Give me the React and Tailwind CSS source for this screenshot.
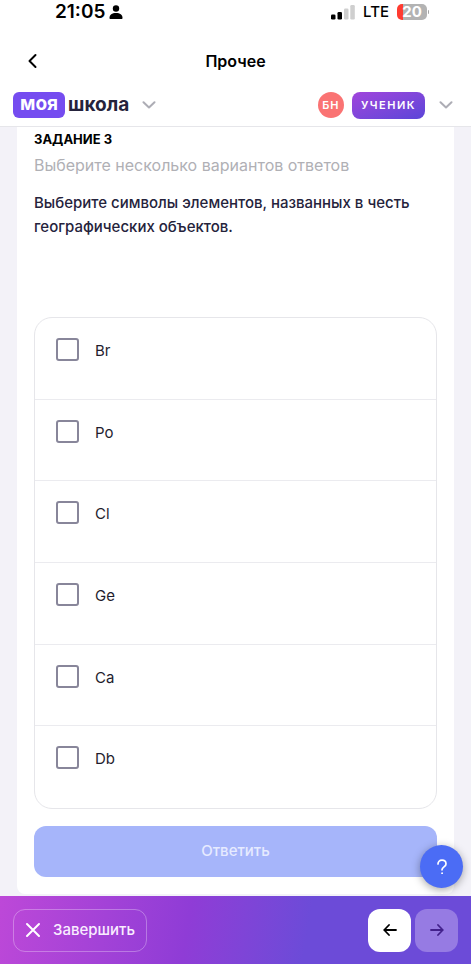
import React from 'react';

const options = ['Br', 'Po', 'Cl', 'Ge', 'Ca', 'Db'];

function ChevronDown() {
  return (
    <svg width="14" height="8" viewBox="0 0 14 8" fill="none" stroke="#adadb5" strokeWidth="2" strokeLinecap="round" strokeLinejoin="round">
      <path d="M1.5 1.2 7 6.5l5.5-5.3" />
    </svg>
  );
}

function StatusBar() {
  return (
    <div className="h-6 flex items-center justify-between pl-[55px] pr-[42px] text-black">
      <div className="flex items-center gap-1">
        <span className="text-[19px] font-semibold">21:05</span>
        <svg width="14" height="16" viewBox="0 0 14 16" fill="currentColor">
          <circle cx="7" cy="4.500" r="3.200" />
          <path d="M.5 14C.5 10.600 3 9 7 9s6.500 1.600 6.500 5c0 .7-.4 1-1 1h-11c-.6 0-1-.3-1-1Z" />
        </svg>
      </div>
      <div className="flex items-center">
        <svg width="24" height="16" viewBox="0 0 24 16">
          <rect x="0" y="10.500" width="4.500" height="5" rx="1.300" fill="#000" />
          <rect x="6.500" y="8" width="4.500" height="7.500" rx="1.300" fill="#000" />
          <rect x="13" y="4.500" width="4.500" height="11" rx="1.300" fill="#cfcfcf" />
          <rect x="19.300" y="1" width="4.500" height="14.500" rx="1.300" fill="#cfcfcf" />
        </svg>
        <span className="ml-2 text-[15px] font-medium">LTE</span>
        <div className="ml-2 flex items-center gap-px">
          <div className="h-4 w-[30px] rounded-[5px] bg-linear-to-r from-[#ff3b30] from-20% to-[#b3b3b3] to-20% flex items-center justify-center text-[15px] font-bold text-white">
            20
          </div>
          <span className="h-1 w-px rounded-r bg-[#a5a5a5]" />
        </div>
      </div>
    </div>
  );
}

function TitleBar() {
  return (
    <div className="mt-[14px] h-[46px] grid grid-cols-[40px_1fr_40px] items-center px-3">
      <button aria-label="Назад" className="h-10 w-10 flex items-center justify-center">
        <svg width="10" height="16" viewBox="0 0 10 16" fill="none" stroke="#000" strokeWidth="2" strokeLinecap="round" strokeLinejoin="round">
          <path d="M8.500 2 2.500 8l6 6" />
        </svg>
      </button>
      <h1 className="text-center text-base font-semibold text-black">Прочее</h1>
    </div>
  );
}

function BrandBar() {
  return (
    <div className="h-[43px] flex items-center justify-between border-b border-[#e6e6ea] pl-[13px] pr-[17px]">
      <div className="flex items-center">
        <a href="#" className="flex items-center gap-[3px] text-[19px] leading-6 font-bold text-[#25233c]">
          <span className="h-[26px] rounded-md bg-[#754cf0] px-[7px] text-white">моя</span>
          <span>школа</span>
        </a>
        <button aria-label="Меню" className="ml-3 p-px">
          <ChevronDown />
        </button>
      </div>
      <div className="flex items-center">
        <span className="h-[26px] w-[26px] rounded-full bg-[#fa7373] flex items-center justify-center text-[11px] font-semibold tracking-widest text-white">
          БН
        </span>
        <span className="ml-2 h-[27px] rounded-lg bg-linear-to-br from-[#a044dc] to-[#5b45d8] px-[9px] flex items-center text-[11px] font-semibold tracking-[1.5px] text-white">
          УЧЕНИК
        </span>
        <button aria-label="Профиль" className="ml-[13px] p-px">
          <ChevronDown />
        </button>
      </div>
    </div>
  );
}

function Option({ label }) {
  return (
    <label className="flex items-start border-b border-[#ebebef] last:border-b-0 pl-[21px] pt-5">
      <input
        type="checkbox"
        className="h-[23px] w-[23px] shrink-0 appearance-none rounded-[3px] border-2 border-[#88869a] checked:bg-[#4b6cf5]"
      />
      <span className="ml-4 mt-px text-[15px] leading-6 text-[#1f1d2e]">{label}</span>
    </label>
  );
}

export default function App() {
  return (
    <div className="min-h-screen flex flex-col bg-white font-['Inter',sans-serif]">
      <header>
        <StatusBar />
        <TitleBar />
        <BrandBar />
      </header>

      {/* Task card */}
      <main className="relative flex-1 bg-[#f3f2f8] pl-[17px] pr-[17px] pb-[2px]">
        <div className="rounded-b-lg bg-white px-[17px] pb-[17px]">
          <h2 className="text-[13px] leading-6 font-bold text-black">ЗАДАНИЕ 3</h2>
          <p className="text-base leading-7 text-[#b0b0b5]">Выберите несколько вариантов ответов</p>
          <p className="mt-3 text-[15px] leading-6 font-medium text-[#25233c]">
            Выберите символы элементов, названных в честь географических объектов.
          </p>

          <div className="mt-[78px] h-[492px] grid grid-rows-6 rounded-[18px] border border-[#e6e6ea]">
            {options.map((label) => (
              <Option key={label} label={label} />
            ))}
          </div>

          <button className="mt-[17px] h-[51px] w-full rounded-xl bg-[#a6b5fa] text-[15px] font-medium text-[#e6ebff]">
            Ответить
          </button>
        </div>

        {/* Help bubble floating over the card */}
        <button
          aria-label="Помощь"
          className="absolute right-2 bottom-2 h-[43px] w-[43px] rounded-full bg-[#4b6cf5] shadow-[0_2px_8px_rgba(0,0,0,0.35)] flex items-center justify-center"
        >
          <svg width="12" height="16" viewBox="0 0 12 16" fill="none" stroke="#fff" strokeWidth="1.700" strokeLinecap="round" strokeLinejoin="round">
            <path d="M2 5C2 2.700 3.500 1.200 6 1.200S10 2.700 10 4.900c0 3-4 2.900-4 5.900" />
            <circle cx="6" cy="14.200" r="0.500" fill="#fff" strokeWidth="1" />
          </svg>
        </button>
      </main>

      {/* Bottom navigation */}
      <footer className="mb-[14px] h-[68px] flex items-center justify-between bg-linear-100 from-[#bd48d8] via-[#8f3cd6] via-40% to-[#6c4bd8] to-65% pl-[13px] pr-[13px]">
        <button className="h-[43px] flex items-center gap-3 rounded-xl border border-white/30 px-[11px] text-[15px] font-medium text-[#f9edff]">
          <svg width="16" height="16" viewBox="0 0 16 16" fill="none" stroke="#fff" strokeWidth="2" strokeLinecap="round">
            <path d="M2 2l12 12M14 2 2 14" />
          </svg>
          Завершить
        </button>
        <div className="flex gap-1">
          <button aria-label="Предыдущее" className="h-[43px] w-[43px] rounded-xl bg-white flex items-center justify-center">
            <svg width="14" height="12" viewBox="0 0 14 12" fill="none" stroke="#000" strokeWidth="1.800" strokeLinecap="round" strokeLinejoin="round">
              <path d="M13 6H1.200M6 1 1.200 6 6 11" />
            </svg>
          </button>
          <button aria-label="Следующее" disabled className="h-[43px] w-[43px] rounded-xl bg-[#967be3] flex items-center justify-center">
            <svg width="14" height="12" viewBox="0 0 14 12" fill="none" stroke="#43218c" strokeWidth="1.800" strokeLinecap="round" strokeLinejoin="round">
              <path d="M1 6h11.800M8 1l4.800 5L8 11" />
            </svg>
          </button>
        </div>
      </footer>
    </div>
  );
}
